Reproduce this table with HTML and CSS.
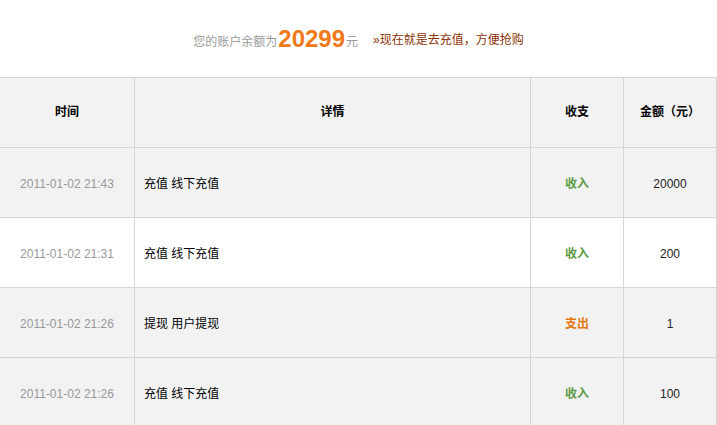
FILE: index.html
```html
<!DOCTYPE html>
<html lang="zh-CN">
<head>
    <meta charset="UTF-8">
    <title>账户明细</title>
    <link rel="stylesheet" href="styles.css">
</head>
<body>
    <div class="balance">
        <span class="balance-label">您的账户余额为</span><span class="balance-num">20299</span><span class="balance-label">元</span>
        <a class="recharge" href="#">»现在就是去充值，方便抢购</a>
    </div>
    <table class="records">
        <thead>
            <tr>
                <th class="col-time">时间</th>
                <th class="col-detail">详情</th>
                <th class="col-type">收支</th>
                <th class="col-amount">金额（元）</th>
            </tr>
        </thead>
        <tbody>
            <tr class="gray">
                <td class="time">2011-01-02 21:43</td>
                <td class="detail">充值 线下充值</td>
                <td class="type in">收入</td>
                <td class="amount">20000</td>
            </tr>
            <tr>
                <td class="time">2011-01-02 21:31</td>
                <td class="detail">充值 线下充值</td>
                <td class="type in">收入</td>
                <td class="amount">200</td>
            </tr>
            <tr class="gray">
                <td class="time">2011-01-02 21:26</td>
                <td class="detail">提现 用户提现</td>
                <td class="type out">支出</td>
                <td class="amount">1</td>
            </tr>
            <tr class="gray">
                <td class="time">2011-01-02 21:26</td>
                <td class="detail">充值 线下充值</td>
                <td class="type in">收入</td>
                <td class="amount">100</td>
            </tr>
        </tbody>
    </table>
</body>
</html>
```
FILE: styles.css
```css
body {
    margin: 0;
    font-family: "Liberation Sans", Arial, "Noto Sans CJK SC", sans-serif;
    font-size: 12px;
    color: #000;
    background: #fff;
}
.balance {
    height: 77px;
    display: flex;
    align-items: center;
    justify-content: center;
    box-sizing: border-box;
    line-height: 1;
}
.balance-label {
    color: #999;
    font-size: 12px;
    margin-top: 6px;
}
.balance-num {
    color: #f07818;
    font-size: 24px;
    font-weight: bold;
    margin: 0 1px;
}
.recharge {
    color: #8a3305;
    text-decoration: none;
    margin-left: 15px;
    margin-top: 3px;
}
.records {
    width: 718px;
    margin-left: -1px;
    border-collapse: collapse;
    table-layout: fixed;
}
.records tr {
    height: 70px;
}
.records th,
.records td {
    border: 1px solid #d6d6d6;
    padding: 3px 0 0;
    line-height: 1.2;
    text-align: center;
    vertical-align: middle;
}
.records th {
    background: #f2f2f2;
    font-weight: bold;
    padding: 0 0 1px;
}
.col-time { width: 134px; }
.col-detail { width: 395px; }
.col-type { width: 92px; }
.records tr.gray td {
    background: #f2f2f2;
}
.time {
    color: #999;
}
.records td.detail {
    text-align: left;
    padding-left: 9px;
}
.type {
    font-weight: bold;
}
.type.in { color: #5b9a45; }
.type.out { color: #e57811; }
.amount {
    color: #222;
}
```
